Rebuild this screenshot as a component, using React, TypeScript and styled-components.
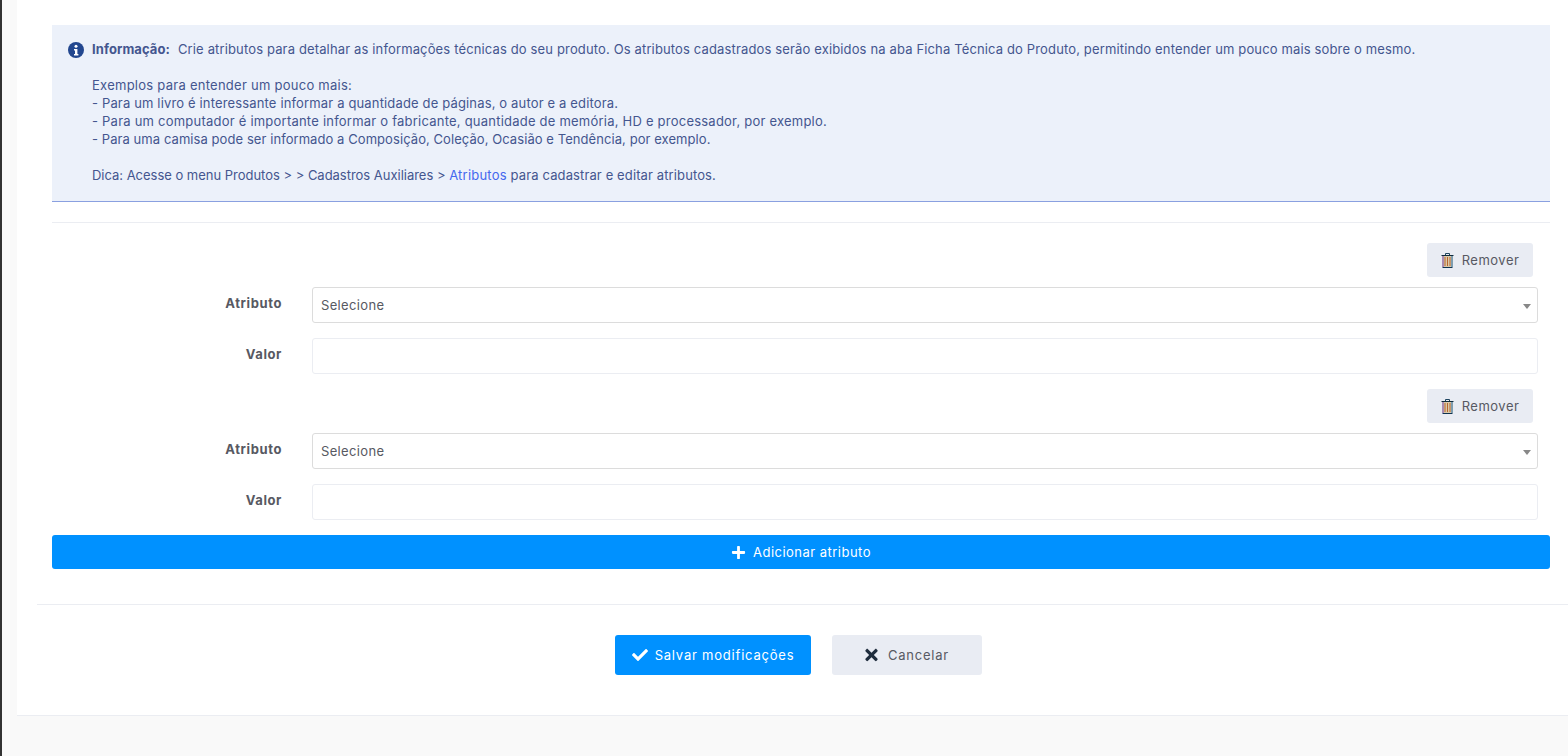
import React from "react";
import styled, { createGlobalStyle } from "styled-components";
import { FaCheck, FaPlus, FaTimes } from "react-icons/fa";

const GlobalStyle = createGlobalStyle`
  html, body { margin: 0; padding: 0; height: 100%; }
  body {
    background: #f9f9f9;
    font-family: Inter, "Noto Sans", "Liberation Sans", sans-serif;
    font-size: 13px;
    color: #575962;
    overflow: hidden;
  }
`;

const Shell = styled.div`
  height: 756px;
  border-left: 2px solid #333;
  padding-left: 15px;
`;

const Panel = styled.div`
  height: 716px;
  box-sizing: border-box;
  background: #fff;
  border-bottom: 1px solid #ebedf2;
  padding: 25px 0 0 20px;
`;

const Body = styled.div`
  padding: 0 18px 0 15px;
`;

const Alert = styled.div`
  height: 177px;
  box-sizing: border-box;
  background: #ecf1fa;
  border-bottom: 1px solid #8aa0e0;
  padding: 15px 16px 0 16px;
  display: flex;
  gap: 8px;
  color: #44568f;
  line-height: 18px;
`;

const InfoGlyph = styled.svg`
  flex: none;
  width: 16px;
  height: 16px;
  margin-top: 2px;
`;

const AlertText = styled.div`
  white-space: nowrap;
`;

const AlertLine = styled.div<{ $gap?: boolean; $tracking: number }>`
  height: 18px;
  letter-spacing: ${(p) => p.$tracking}px;
  margin-bottom: ${(p) => (p.$gap ? "18px" : "0")};
`;

const AlertLabel = styled.strong`
  font-weight: 700;
  letter-spacing: 0.08px;
  margin-right: 8px;
`;

const AlertLink = styled.span`
  color: #4468ee;
  letter-spacing: 0.23px;
`;

const AlertTail = styled.span`
  letter-spacing: 0.12px;
`;

const Divider = styled.hr`
  border: 0;
  border-top: 1px solid #ebedf2;
  margin: 20px 0 0;
`;

const Rows = styled.div`
  padding-top: 20px;
`;

const AttributeBlock = styled.div`
  margin-bottom: 15px;
`;

const RemoveRow = styled.div`
  display: flex;
  justify-content: flex-end;
  padding-right: 17px;
  margin-bottom: 10px;
`;

const RemoveButton = styled.button`
  width: 106px;
  height: 34px;
  border: 0;
  border-radius: 3px;
  background: #e9ecf3;
  color: #575962;
  font: inherit;
  letter-spacing: 0.5px;
  display: flex;
  align-items: center;
  justify-content: center;
  gap: 8px;
  padding: 0;
`;

const FieldRow = styled.div<{ $last?: boolean }>`
  display: flex;
  align-items: center;
  gap: 30px;
  padding-right: 12px;
  margin-bottom: ${(p) => (p.$last ? "0" : "15px")};
`;

const FieldLabel = styled.label`
  width: 230px;
  flex: none;
  text-align: right;
  font-weight: 700;
  letter-spacing: 0.6px;
  color: #575962;
  position: relative;
  top: -2px;
`;

const SelectBox = styled.div`
  flex: 1;
  height: 36px;
  box-sizing: border-box;
  border: 1px solid #dcdcdc;
  border-radius: 3px;
  padding: 0 8px;
  display: flex;
  align-items: center;
  justify-content: space-between;
  color: #575962;
  letter-spacing: 0.35px;
`;

const Caret = styled.span`
  width: 0;
  height: 0;
  border-left: 4px solid transparent;
  border-right: 4px solid transparent;
  border-top: 5px solid #888;
  margin-top: 2px;
  margin-right: -2px;
`;

const TextBox = styled.div`
  flex: 1;
  height: 36px;
  box-sizing: border-box;
  border: 1px solid #ebedf2;
  border-radius: 3px;
`;

const PrimaryButton = styled.button<{ $wide?: boolean }>`
  width: ${(p) => (p.$wide ? "100%" : "196px")};
  height: ${(p) => (p.$wide ? "34px" : "40px")};
  border: 0;
  border-radius: 3px;
  background: #0091ff;
  color: #fff;
  font: inherit;
  letter-spacing: ${(p) => (p.$wide ? "0.48px" : "0.79px")};
  display: flex;
  align-items: center;
  justify-content: center;
  gap: 7px;
  padding: 0;
`;

const WhiteIcon = styled.span<{ $size: number }>`
  display: inline-flex;
  font-size: ${(p) => p.$size}px;
  color: #fff;
`;

const Footer = styled.div`
  margin-top: 35px;
  border-top: 1px solid #ebedf2;
  padding: 30px 8px 0 0;
  display: flex;
  justify-content: center;
  gap: 21px;
`;

const CancelButton = styled.button`
  width: 150px;
  height: 40px;
  border: 0;
  border-radius: 3px;
  background: #e9ecf3;
  color: #575962;
  font: inherit;
  letter-spacing: 0.76px;
  display: flex;
  align-items: center;
  justify-content: center;
  gap: 10px;
  padding: 0;
`;

const CancelIcon = styled(FaTimes)`
  width: 13px;
  height: 18px;
  color: #1f2d3d;
`;

const InfoIcon = () => (
  <InfoGlyph viewBox="0 0 16 16">
    <circle cx="8" cy="8" r="8" fill="#22478f" />
    <circle cx="8" cy="4.3" r="1.5" fill="#fff" />
    <path d="M6 7h3.4v5h1v1.4H6V12h1V8.4H6z" fill="#fff" />
  </InfoGlyph>
);

const TrashIcon = () => (
  <svg width="13" height="15" viewBox="0 0 13 15" fill="none">
    <path d="M4.5 2V.5h4V2" stroke="#1f4560" />
    <path d="M0.5 2.5h12" stroke="#0f2a3a" />
    <path d="M3 3h7v11H3z" fill="#d9c8a8" />
    <path d="M2 3v11" stroke="#6b2a70" />
    <path d="M11 3v11" stroke="#14506f" />
    <path d="M1.5 14.5h10" stroke="#0f3250" />
    <path d="M4 4v9" stroke="#b8662c" />
    <path d="M6.5 4v9" stroke="#b8662c" />
    <path d="M9 4v9" stroke="#b8662c" />
  </svg>
);

const AttributeFields = () => (
  <AttributeBlock>
    <RemoveRow>
      <RemoveButton>
        <TrashIcon />
        Remover
      </RemoveButton>
    </RemoveRow>
    <FieldRow>
      <FieldLabel>Atributo</FieldLabel>
      <SelectBox>
        Selecione
        <Caret />
      </SelectBox>
    </FieldRow>
    <FieldRow $last>
      <FieldLabel>Valor</FieldLabel>
      <TextBox />
    </FieldRow>
  </AttributeBlock>
);

export default function App() {
  return (
    <Shell>
      <GlobalStyle />
      <Panel>
        <Body>
          <Alert>
            <InfoIcon />
            <AlertText>
              <AlertLine $gap $tracking={0.143}>
                <AlertLabel>Informação:</AlertLabel>
                Crie atributos para detalhar as informações técnicas do seu produto. Os atributos cadastrados serão exibidos na aba Ficha Técnica do Produto, permitindo entender um pouco mais sobre o mesmo.
              </AlertLine>
              <AlertLine $tracking={0.26}>Exemplos para entender um pouco mais:</AlertLine>
              <AlertLine $tracking={0.153}>- Para um livro é interessante informar a quantidade de páginas, o autor e a editora.</AlertLine>
              <AlertLine $tracking={0.224}>- Para um computador é importante informar o fabricante, quantidade de memória, HD e processador, por exemplo.</AlertLine>
              <AlertLine $gap $tracking={0.07}>- Para uma camisa pode ser informado a Composição, Coleção, Ocasião e Tendência, por exemplo.</AlertLine>
              <AlertLine $tracking={-0.02}>
                Dica: Acesse o menu Produtos &gt; &gt; Cadastros Auxiliares &gt; <AlertLink>Atributos</AlertLink>
                <AlertTail> para cadastrar e editar atributos.</AlertTail>
              </AlertLine>
            </AlertText>
          </Alert>
          <Divider />
          <Rows>
            <AttributeFields />
            <AttributeFields />
            <PrimaryButton $wide>
              <WhiteIcon $size={15}>
                <FaPlus />
              </WhiteIcon>
              Adicionar atributo
            </PrimaryButton>
          </Rows>
        </Body>
        <Footer>
          <PrimaryButton>
            <WhiteIcon $size={16}>
              <FaCheck />
            </WhiteIcon>
            Salvar modificações
          </PrimaryButton>
          <CancelButton>
            <CancelIcon />
            Cancelar
          </CancelButton>
        </Footer>
      </Panel>
    </Shell>
  );
}
